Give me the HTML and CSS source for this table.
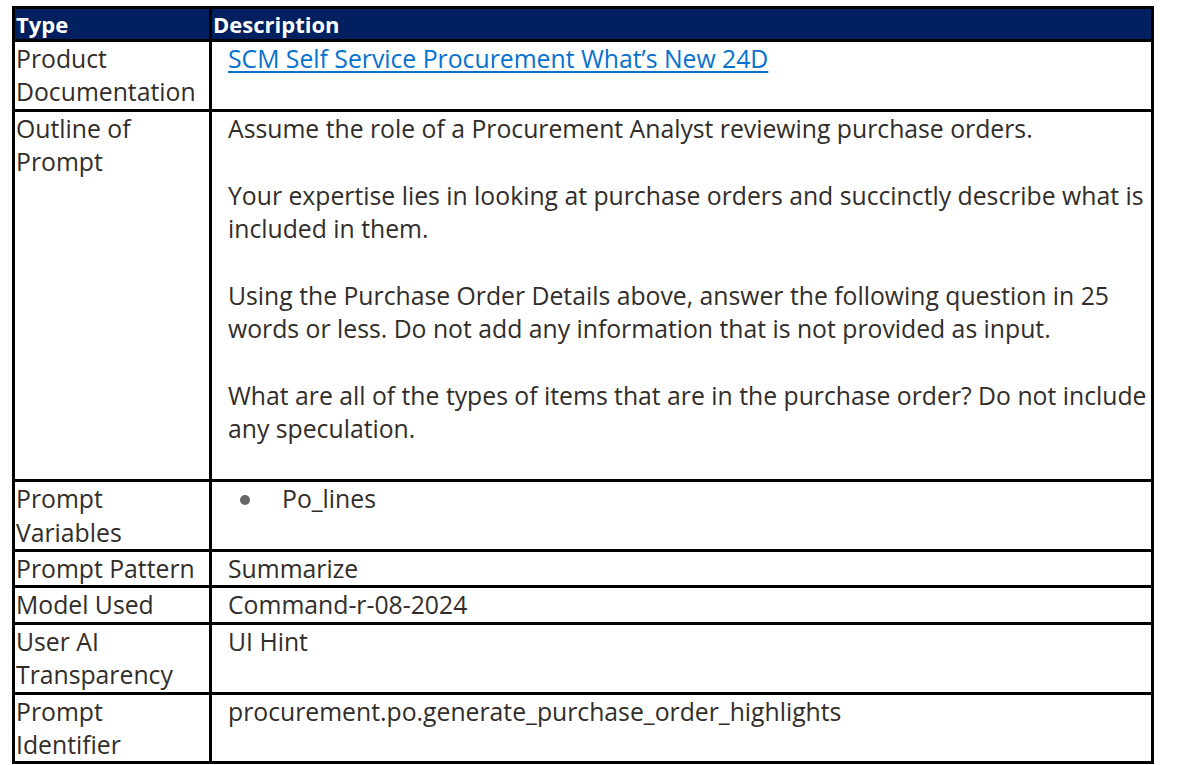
FILE: index.html
```html
<!DOCTYPE html>
<html>
<head>
<meta charset="utf-8">
<link rel="stylesheet" href="styles.css">
</head>
<body>
<div class="table">
  <div class="cell head">Type</div>
  <div class="cell head desc-head">Description</div>

  <div class="cell type">Product Documentation</div>
  <div class="cell desc"><a class="link" href="#">SCM Self Service Procurement What’s New 24D</a></div>

  <div class="cell type">Outline of Prompt</div>
  <div class="cell desc">
    <p class="para">Assume the role of a Procurement Analyst reviewing purchase orders.</p>
    <p class="para">Your expertise lies in looking at purchase orders and succinctly describe what is included in them.</p>
    <p class="para">Using the Purchase Order Details above, answer the following question in 25 words or less. Do not add any information that is not provided as input.</p>
    <p class="para">What are all of the types of items that are in the purchase order? Do not include any speculation.</p>
  </div>

  <div class="cell type">Prompt Variables</div>
  <div class="cell desc">
    <ul class="bullets"><li>Po_lines</li></ul>
  </div>

  <div class="cell type">Prompt Pattern</div>
  <div class="cell desc">Summarize</div>

  <div class="cell type">Model Used</div>
  <div class="cell desc">Command-r-08-2024</div>

  <div class="cell type">User AI Transparency</div>
  <div class="cell desc">UI Hint</div>

  <div class="cell type">Prompt Identifier</div>
  <div class="cell desc">procurement.po.generate_purchase_order_highlights</div>
</div>
</body>
</html>
```

FILE: styles.css
```css
html, body {
  margin: 0;
  background: #ffffff;
}
body {
  padding: 6px 0 0 12px;
  font-family: "Open Sans", "Noto Sans", sans-serif;
  color: #312d2a;
}
.table {
  width: 1142px;
  box-sizing: border-box;
  display: grid;
  grid-template-columns: 194px 939px;
  gap: 3px;
  padding: 3px;
  background: #000000;
}
.cell {
  background: #ffffff;
  font-size: 24.75px;
  line-height: 33.4px;
}
.head {
  background: #002060;
  color: #ffffff;
  font-weight: 700;
  font-size: 22px;
  height: 30px;
  line-height: 30px;
  padding-left: 1px;
}
.desc-head {
  padding-left: 1px;
}
.type {
  padding-left: 1px;
}
.desc {
  padding-left: 16px;
}
.link {
  color: #0572ce;
  text-decoration: underline;
  text-underline-offset: 3px;
}
.para {
  margin: 0 0 33.4px 0;
}
.bullets {
  margin: 0;
  padding: 0 0 0 54px;
  list-style: none;
}
.bullets li {
  position: relative;
}
.bullets li::before {
  content: "";
  position: absolute;
  left: -42px;
  top: 13px;
  width: 10px;
  height: 10px;
  border-radius: 50%;
  background: #666666;
}
```
